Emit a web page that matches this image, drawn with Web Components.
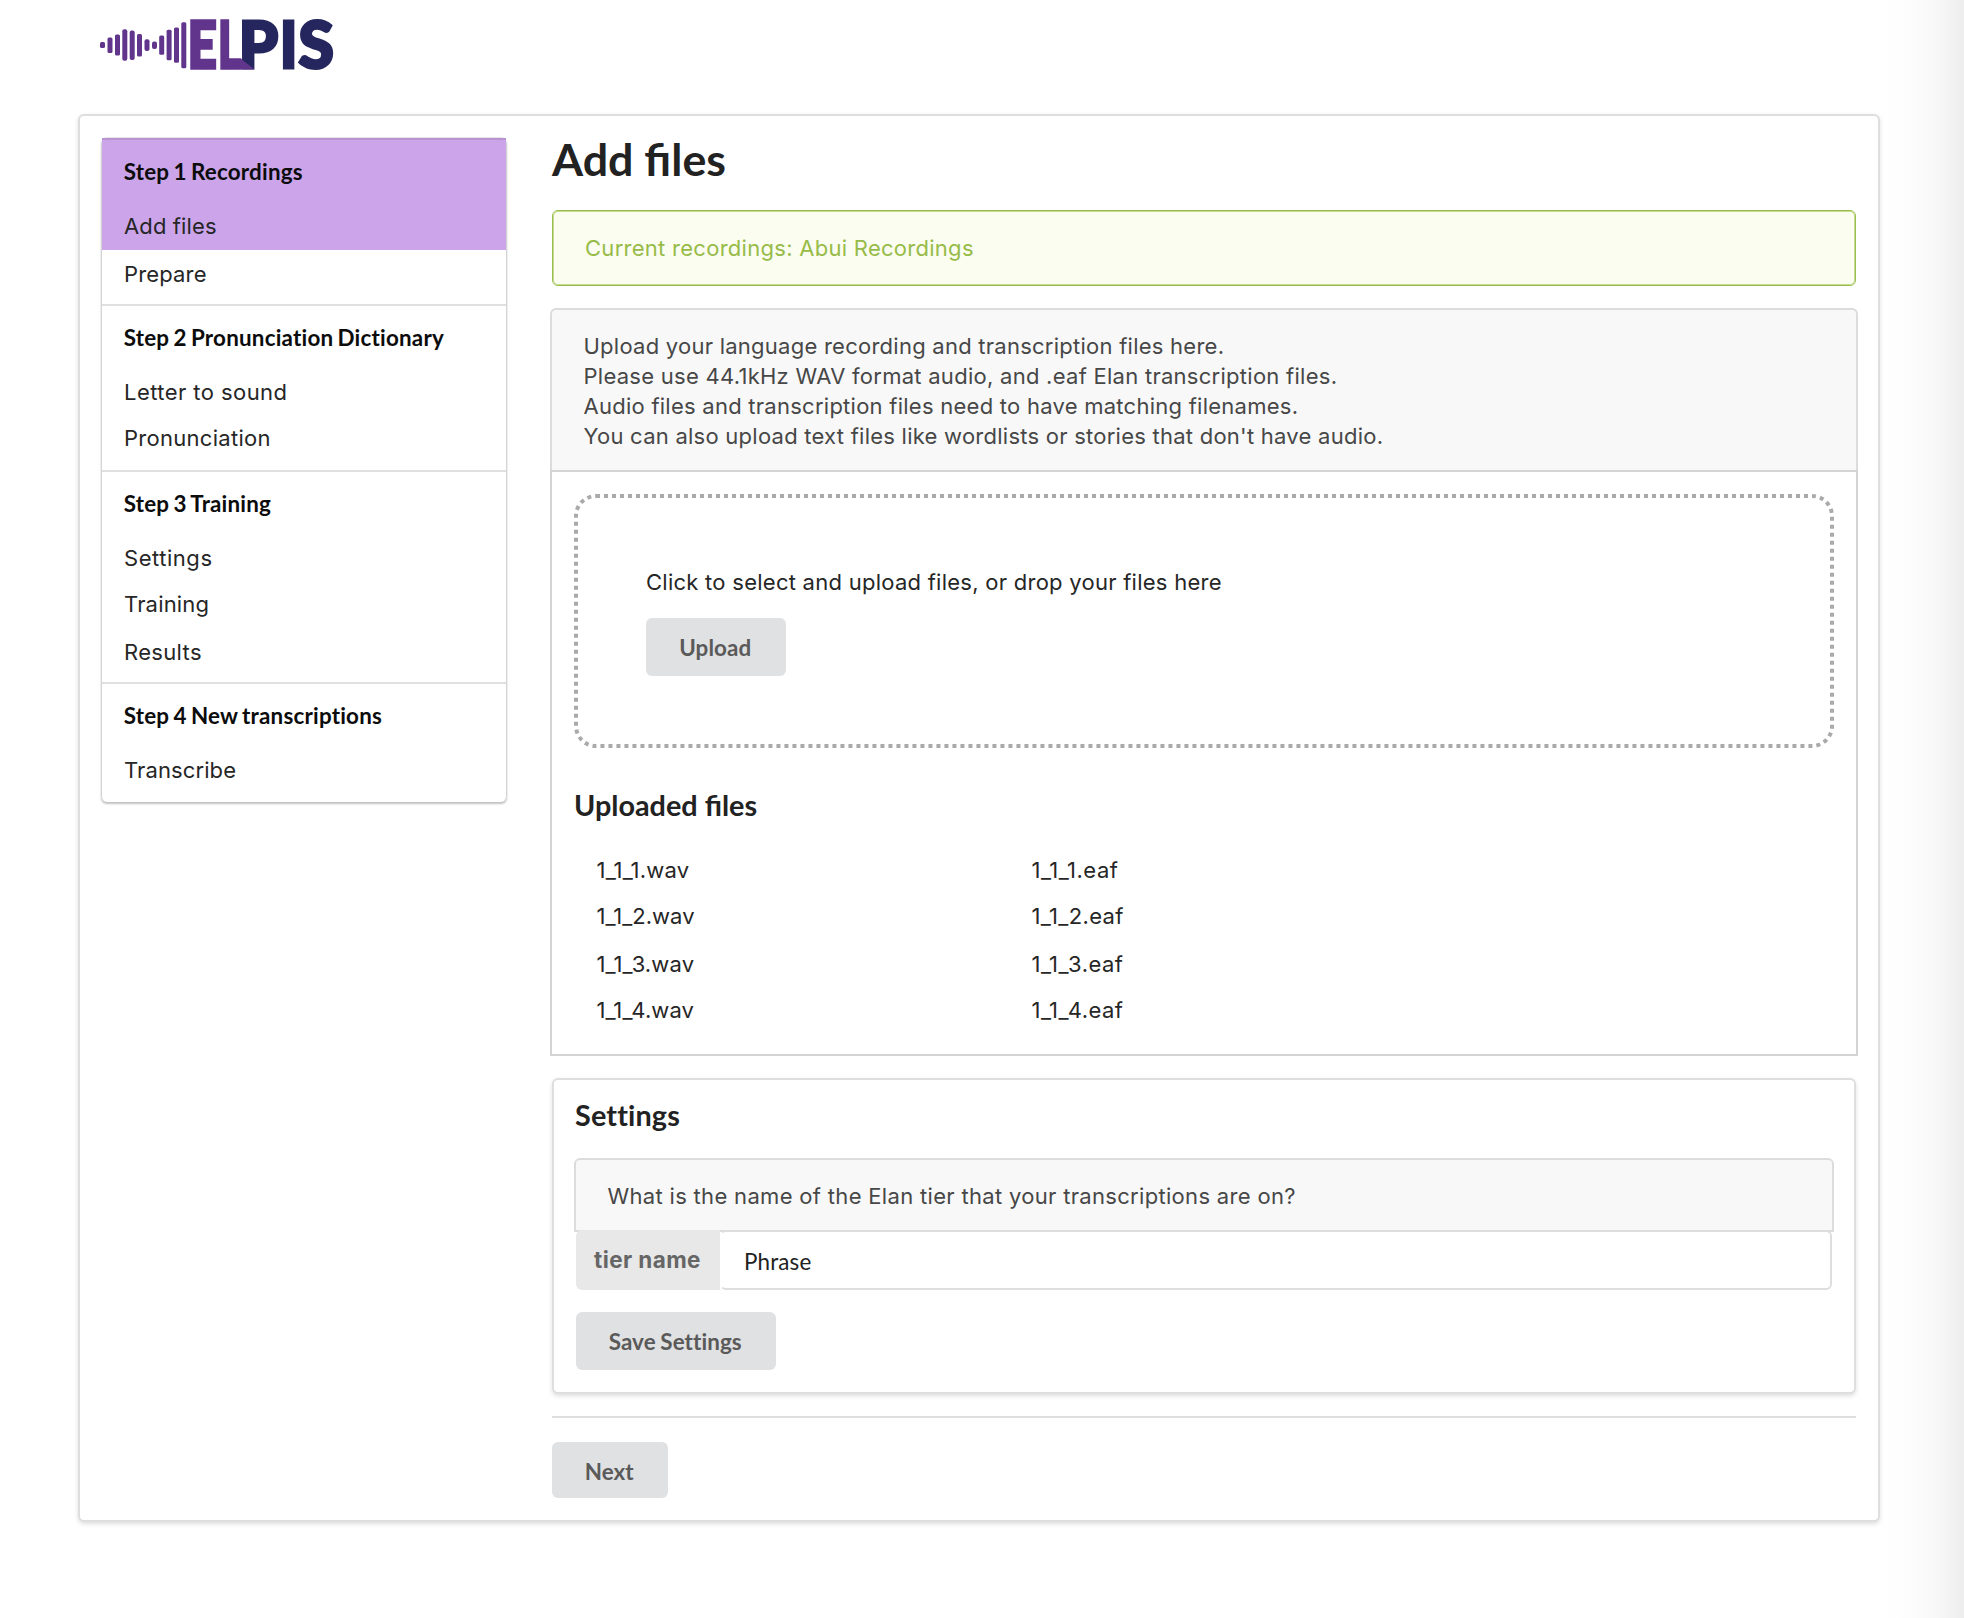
<!DOCTYPE html>
<html lang="en">
<head>
<meta charset="utf-8">
<title>Elpis</title>
<style>
html,body{margin:0;background:#fff}
body{font-family:Inter,"Liberation Sans",sans-serif;font-size:22px;color:#262626}
</style>
</head>
<body>
<elpis-app></elpis-app>
<script>
function define(name, html, ready) {
  const t = document.createElement('template');
  t.innerHTML = html;
  customElements.define(name, class extends HTMLElement {
    connectedCallback() {
      if (this.shadowRoot) return;
      this.attachShadow({mode: 'open'}).append(t.content.cloneNode(true));
      if (ready) ready.call(this, this.shadowRoot);
    }
  });
}

// A single line of text tracked out to a given width.
define('tracked-text', `<style>:host{display:block;white-space:nowrap;line-height:30px}span{display:inline-block}</style><span><slot></slot></span>`, function (root) {
  const s = root.querySelector('span');
  const n = this.textContent.length - 1;
  const track = () => {
    s.style.letterSpacing = '0px';
    s.style.letterSpacing = (this.getAttribute('w') - s.getBoundingClientRect().width) / n + 'px';
  };
  track();
  document.fonts.ready.then(track);
});

// Wordmark letters carry the left and right edge of their ink in data-x.
define('elpis-logo', `<style>:host{display:block;width:236px;height:56px}svg{display:block;overflow:visible}text{font-family:Lato,sans-serif;font-weight:900;font-size:64px;stroke-width:3px;vector-effect:non-scaling-stroke}</style>
<svg width="236" height="56" viewBox="100 18 236 56">
<g fill="#61358c">
<rect x="100" y="42" width="5" height="6" rx="1.5"/><rect x="107.500" y="37.500" width="5" height="15.500" rx="1.500"/>
<rect x="115" y="34.500" width="5" height="21" rx="1.500"/><rect x="122.300" y="29.300" width="5" height="31.500" rx="2"/>
<rect x="129.700" y="30.500" width="5" height="29.500" rx="2"/><rect x="137" y="34" width="5" height="22.500" rx="1.500"/>
<rect x="144.500" y="39.300" width="5" height="11.700" rx="2"/><rect x="152" y="41.500" width="5" height="7.500" rx="2"/>
<rect x="159.200" y="35.500" width="5" height="19.300" rx="1.500"/><rect x="166.600" y="29.800" width="5" height="30.500" rx="1.500"/>
<rect x="174" y="27.500" width="5" height="35.300" rx="1.500"/><rect x="181.300" y="22.200" width="5" height="46" rx="1.500"/>
</g>
<text data-x="189.300 216.700" fill="#61358c" stroke="#61358c">E</text><text data-x="219.500 242" fill="#61358c" stroke="#61358c">L</text><text data-x="241.200 278.500" fill="#24265d" stroke="#24265d">P</text><text data-x="282 294.800" fill="#24265d" stroke="#24265d">I</text><text data-x="298 334" fill="#24265d" stroke="#24265d">S</text>
<path fill="#61358c" d="M241 58.700l13.500 10.800h-13.500z"/>
</svg>`, function (r) {
  const ctx = document.createElement('canvas').getContext('2d');
  const half = 1.5;
  const place = () => {
    ctx.font = '900 64px Lato, sans-serif';
    r.querySelectorAll('text').forEach(t => {
      const [a, b] = t.dataset.x.split(' ').map(Number);
      const m = ctx.measureText(t.textContent);
      const k = (b - a - 2 * half) / (m.actualBoundingBoxRight + m.actualBoundingBoxLeft);
      t.setAttribute('transform', `translate(${a + half + m.actualBoundingBoxLeft * k} ${69.5 - half}) scale(${k} 1)`);
    });
  };
  place();
  document.fonts.ready.then(place);
});

define('step-section', `<style>
:host{display:block;padding-bottom:8px;border-top:2px solid #e0e0e0}
:host([current]){border-top-color:#b893d4}
h4{margin:0;height:64px;box-sizing:border-box;padding-left:21.700px;font:700 22.4px/64px Lato,sans-serif;letter-spacing:.21px;word-spacing:-1.4px;color:#0c0c0c}
:host([current]) h4{background:#cba4ea}
</style><h4></h4><slot></slot>`, function (r) { r.querySelector('h4').textContent = this.getAttribute('heading'); });

define('step-item', `<style>
:host{display:flex;height:46px;padding:0 0 0 22px;box-sizing:border-box}
tracked-text{line-height:44px}
:host([low]){margin:2px 0 -2px}
:host([current]){background:#cba4ea}
</style><tracked-text></tracked-text>`, function (r) {
  const t = r.querySelector('tracked-text');
  const n = document.createElement('tracked-text');
  n.setAttribute('w', this.getAttribute('w'));
  n.textContent = this.textContent;
  t.replaceWith(n);
});

define('step-menu', `<style>
:host{display:block;width:404px;flex:none;border-radius:6px;border:1px solid #d4d4d5;border-top:0;border-bottom:0;box-shadow:0 2px 2px rgba(34,36,38,.28),0 -1px 0 #e4e4e4}
</style>
<step-section current heading="Step 1 Recordings"><step-item current w="92.500">Add files</step-item><step-item low w="82.500">Prepare</step-item></step-section>
<step-section heading="Step 2 Pronunciation Dictionary"><step-item w="163">Letter to sound</step-item><step-item w="146.500">Pronunciation</step-item></step-section>
<step-section heading="Step 3 Training"><step-item w="88">Settings</step-item><step-item w="85">Training</step-item><step-item low w="77.500">Results</step-item></step-section>
<step-section heading="Step 4 New transcriptions"><step-item w="112">Transcribe</step-item></step-section>`);

define('ui-button', `<style>
:host{display:block;width:max-content}
button{display:block;box-sizing:border-box;margin:0;border:0;border-radius:6px;height:var(--h,58px);width:var(--w);padding:var(--pt,2px) 1.500px 0 0;background:#e0e1e2;color:#5a5a5a;font:700 22.400px/1 Lato,sans-serif;letter-spacing:.1px;word-spacing:-1px;text-align:center}
</style><button><slot></slot></button>`);

define('ui-message', `<style>
:host{display:block;box-sizing:border-box;height:76px;border:1px solid #98bd4c;box-shadow:inset 0 0 0 1px #c6dc93;border-radius:6px;background:#fbfdf0;color:#97bb48;padding:22px 32px}
</style><slot></slot>`);

define('info-note', `<style>
:host{display:block;box-sizing:border-box;border:2px solid #dcdcdd;border-radius:6px 6px 0 0;background:#f8f8f8;color:#474747;padding:21px 31.500px}
</style><slot></slot>`);

define('drop-zone', `<style>
:host{display:grid;height:254px;box-sizing:border-box}
:host>*{grid-area:1/1}
svg{display:block;width:1260px;height:254px}
div{padding:73px 0 0 72px}
ui-button{--w:140px;margin-top:21px}
</style>
<svg viewBox="0 0 1260 254"><rect x="2" y="2" width="1256" height="250" rx="20" fill="none" stroke="#aaa" stroke-width="4" stroke-dasharray="4 4"/></svg>
<div><tracked-text w="575.500">Click to select and upload files, or drop your files here</tracked-text><ui-button>Upload</ui-button></div>`);

define('file-list', `<style>
:host{display:grid;grid-template-columns:435px 435px;grid-template-rows:46px 48px 46px 46px}
tracked-text{line-height:46px}
</style>`, function (r) {
  const ws = [[92.5, 86.5], [98, 92], [97.5, 91.5], [97.5, 91.5]];
  ws.forEach((p, i) => ['wav', 'eaf'].forEach((ext, c) => {
    const t = document.createElement('tracked-text');
    t.setAttribute('w', p[c]);
    t.textContent = '1_1_' + (i + 1) + '.' + ext;
    r.append(t);
  }));
});

define('upload-panel', `<style>
:host{display:block;margin:22px -2px 0}
info-note{height:162px;border-bottom:0}
section{box-sizing:border-box;height:586px;border:2px solid #d4d4d5;padding:22px 22px 0}
h3{margin:42px 0 27px;font:700 28.800px/30px Lato,sans-serif;color:#222}
file-list{margin-left:22.500px}
</style>
<info-note><tracked-text w="640.500">Upload your language recording and transcription files here.</tracked-text><tracked-text w="753.500">Please use 44.1kHz WAV format audio, and .eaf Elan transcription files.</tracked-text><tracked-text w="714.500">Audio files and transcription files need to have matching filenames.</tracked-text><tracked-text w="799.500">You can also upload text files like wordlists or stories that don't have audio.</tracked-text></info-note>
<section><drop-zone></drop-zone><h3>Uploaded files</h3><file-list></file-list></section>`);

define('labeled-input', `<style>
:host{display:flex;height:60px;margin:-2px 2px 0;position:relative}
label{width:144px;box-sizing:border-box;padding:15px 0 0 18px;background:#e8e8e8;border-radius:6px 0 0 6px;color:#666;font-size:22.500px;font-weight:700}
input{flex:1;min-width:0;box-sizing:border-box;margin:0;border:2px solid #dededf;border-left-color:transparent;border-radius:6px;padding:3px 0 0 22px;background:#fff;background-clip:padding-box;outline:0;color:#222;font:400 22.400px Lato,sans-serif;letter-spacing:.15px}
</style><label><tracked-text w="106.500">tier name</tracked-text></label><input value="Phrase">`);

define('ui-segment', `<style>
:host{display:block;box-sizing:border-box;border:2px solid #dededf;border-radius:6px;background:#fff;box-shadow:0 2px 4px rgba(34,36,38,.15)}
</style><slot></slot>`);

define('settings-panel', `<style>
:host{display:block;margin-top:22px}
ui-segment{height:316px;padding:20px 20px 0}
h3{margin:0 0 28px 1px;font:700 28.800px/30px Lato,sans-serif;letter-spacing:.15px;color:#222}
info-note{height:74px}
ui-button{--w:200px;margin:22px 0 0 2px}
</style><ui-segment><h3>Settings</h3><info-note><tracked-text w="688">What is the name of the Elan tier that your transcriptions are on?</tracked-text></info-note><labeled-input></labeled-input><ui-button>Save Settings</ui-button></ui-segment>`);

define('elpis-app', `<style>
:host{display:block;box-sizing:border-box;height:1618px;padding:18px 84px 0 78px;background:linear-gradient(to right,transparent 0,rgba(0,0,0,.008) 35%,rgba(0,0,0,.03) 70%,rgba(0,0,0,.072) 100%) right/84px 100% no-repeat #fff}
elpis-logo{margin:0 0 40px 22px}
.page{height:1408px;padding:20px 22px 0 21px;display:flex;gap:45px;align-items:flex-start}
step-menu{margin-top:2px}
main{flex:1;min-width:0}
h1{margin:0 0 28px;font:700 44.800px/46px Lato,sans-serif;color:#222}
hr{margin:22px 0 24px;border:0;height:2px;background:#dededf}
ui-button.next{--w:116px;--h:56px;--pt:4px}
</style>
<elpis-logo></elpis-logo>
<ui-segment class="page"><step-menu></step-menu><main><h1>Add files</h1><ui-message><tracked-text w="388.500">Current recordings: Abui Recordings</tracked-text></ui-message><upload-panel></upload-panel><settings-panel></settings-panel><hr><ui-button class="next">Next</ui-button></main></ui-segment>`);
</script>
</body>
</html>
